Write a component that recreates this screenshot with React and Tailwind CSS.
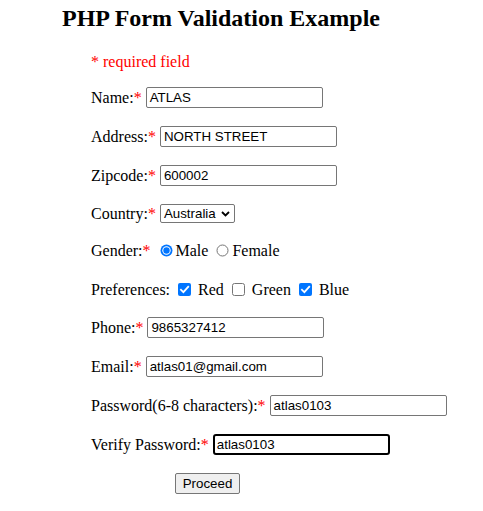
import React from "react";

const serif = { fontFamily: '"Liberation Serif", "Times New Roman", serif' };

function Star() {
  return <span className="text-[#ff0000]">*</span>;
}

function TextBox({ value, focused }) {
  return (
    <div
      className={
        "ml-[4px] flex h-[21px] w-[177px] items-center bg-white text-[13.33px] text-black " +
        (focused
          ? "rounded-[3px] border-2 border-black pl-[2px]"
          : "rounded-[2px] border border-[#767676] pl-[3px]")
      }
      style={{ fontFamily: '"Liberation Sans", Arial, sans-serif' }}
    >
      {value}
    </div>
  );
}

function Row({ children, className = "" }) {
  return <div className={"flex items-center whitespace-nowrap " + className}>{children}</div>;
}

function Radio({ checked }) {
  return checked ? (
    <svg width="13" height="13" viewBox="0 0 13 13" className="shrink-0">
      <circle cx="6.5" cy="6.5" r="6" fill="#0075ff" />
      <circle cx="6.5" cy="6.5" r="4.2" fill="#fff" />
      <circle cx="6.5" cy="6.5" r="3.2" fill="#0075ff" />
    </svg>
  ) : (
    <svg width="13" height="13" viewBox="0 0 13 13" className="shrink-0">
      <circle cx="6.5" cy="6.5" r="5.5" fill="#fff" stroke="#767676" strokeWidth="1" />
    </svg>
  );
}

function Check({ checked }) {
  return checked ? (
    <svg width="13" height="13" viewBox="0 0 13 13" className="shrink-0">
      <rect x="0" y="0" width="13" height="13" rx="2" fill="#0075ff" />
      <path d="M3 6.8 L5.4 9.2 L10.2 3.8" fill="none" stroke="#fff" strokeWidth="1.8" strokeLinecap="square" />
    </svg>
  ) : (
    <svg width="13" height="13" viewBox="0 0 13 13" className="shrink-0">
      <rect x="0.5" y="0.5" width="12" height="12" rx="2" fill="#fff" stroke="#767676" strokeWidth="1" />
    </svg>
  );
}

export default function App() {
  return (
    <div className="min-h-[511px] w-[483px] bg-white text-[16px] text-black" style={serif}>
      <h2 className="ml-[62px] pt-[4px] text-[24px] font-bold leading-[28px]">
        PHP Form Validation Example
      </h2>
      <div className="pl-[91px]">
        <div className="mt-[21px] h-[18px] leading-[18px] text-[#ff0000]">* required field</div>

        <Row className="mt-[16px] h-[21px]">
          Name:<Star />
          <TextBox value="ATLAS" />
        </Row>
        <Row className="mt-[18px] h-[21px]">
          Address:<Star />
          <TextBox value="NORTH STREET" />
        </Row>
        <Row className="mt-[18px] h-[21px]">
          Zipcode:<Star />
          <TextBox value="600002" />
        </Row>
        <Row className="mt-[18px] h-[19px]">
          Country:<Star />
          <div
            className="ml-[4px] flex h-[19px] w-[75px] items-center rounded-[2px] border border-[#767676] bg-white pl-[3px] text-[13.33px]"
            style={{ fontFamily: '"Liberation Sans", Arial, sans-serif' }}
          >
            <span>Australia</span>
            <svg width="9" height="6" viewBox="0 0 9 6" className="ml-[5px]">
              <path d="M1 1 L4.5 4.5 L8 1" fill="none" stroke="#000" strokeWidth="1.8" />
            </svg>
          </div>
        </Row>
        <Row className="mt-[18px] h-[19px]">
          Gender:<Star />
          <span className="ml-[9px] mr-[3px] flex"><Radio checked /></span>
          Male
          <span className="ml-[8px] mr-[3px] flex"><Radio /></span>
          Female
        </Row>
        <Row className="mt-[20px] h-[19px]">
          Preferences:
          <span className="ml-[8px] mr-[7px] flex"><Check checked /></span>
          Red
          <span className="ml-[8px] mr-[7px] flex"><Check /></span>
          Green
          <span className="ml-[8px] mr-[7px] flex"><Check checked /></span>
          Blue
        </Row>
        <Row className="mt-[18px] h-[21px]">
          Phone:<Star />
          <TextBox value="9865327412" />
        </Row>
        <Row className="mt-[18px] h-[21px]">
          Email:<Star />
          <TextBox value="atlas01@gmail.com" />
        </Row>
        <Row className="mt-[18px] h-[21px]">
          Password(6-8 characters):<Star />
          <TextBox value="atlas0103" />
        </Row>
        <Row className="mt-[18px] h-[21px]">
          Verify Password:<Star />
          <TextBox value="atlas0103" focused />
        </Row>
        <Row className="mt-[18px] h-[21px]">
          <button
            className="ml-[84px] flex h-[21px] w-[65px] items-center justify-center rounded-[2px] border border-[#767676] bg-[#efefef] text-[13.33px]"
            style={{ fontFamily: '"Liberation Sans", Arial, sans-serif' }}
          >
            Proceed
          </button>
        </Row>
      </div>
    </div>
  );
}
